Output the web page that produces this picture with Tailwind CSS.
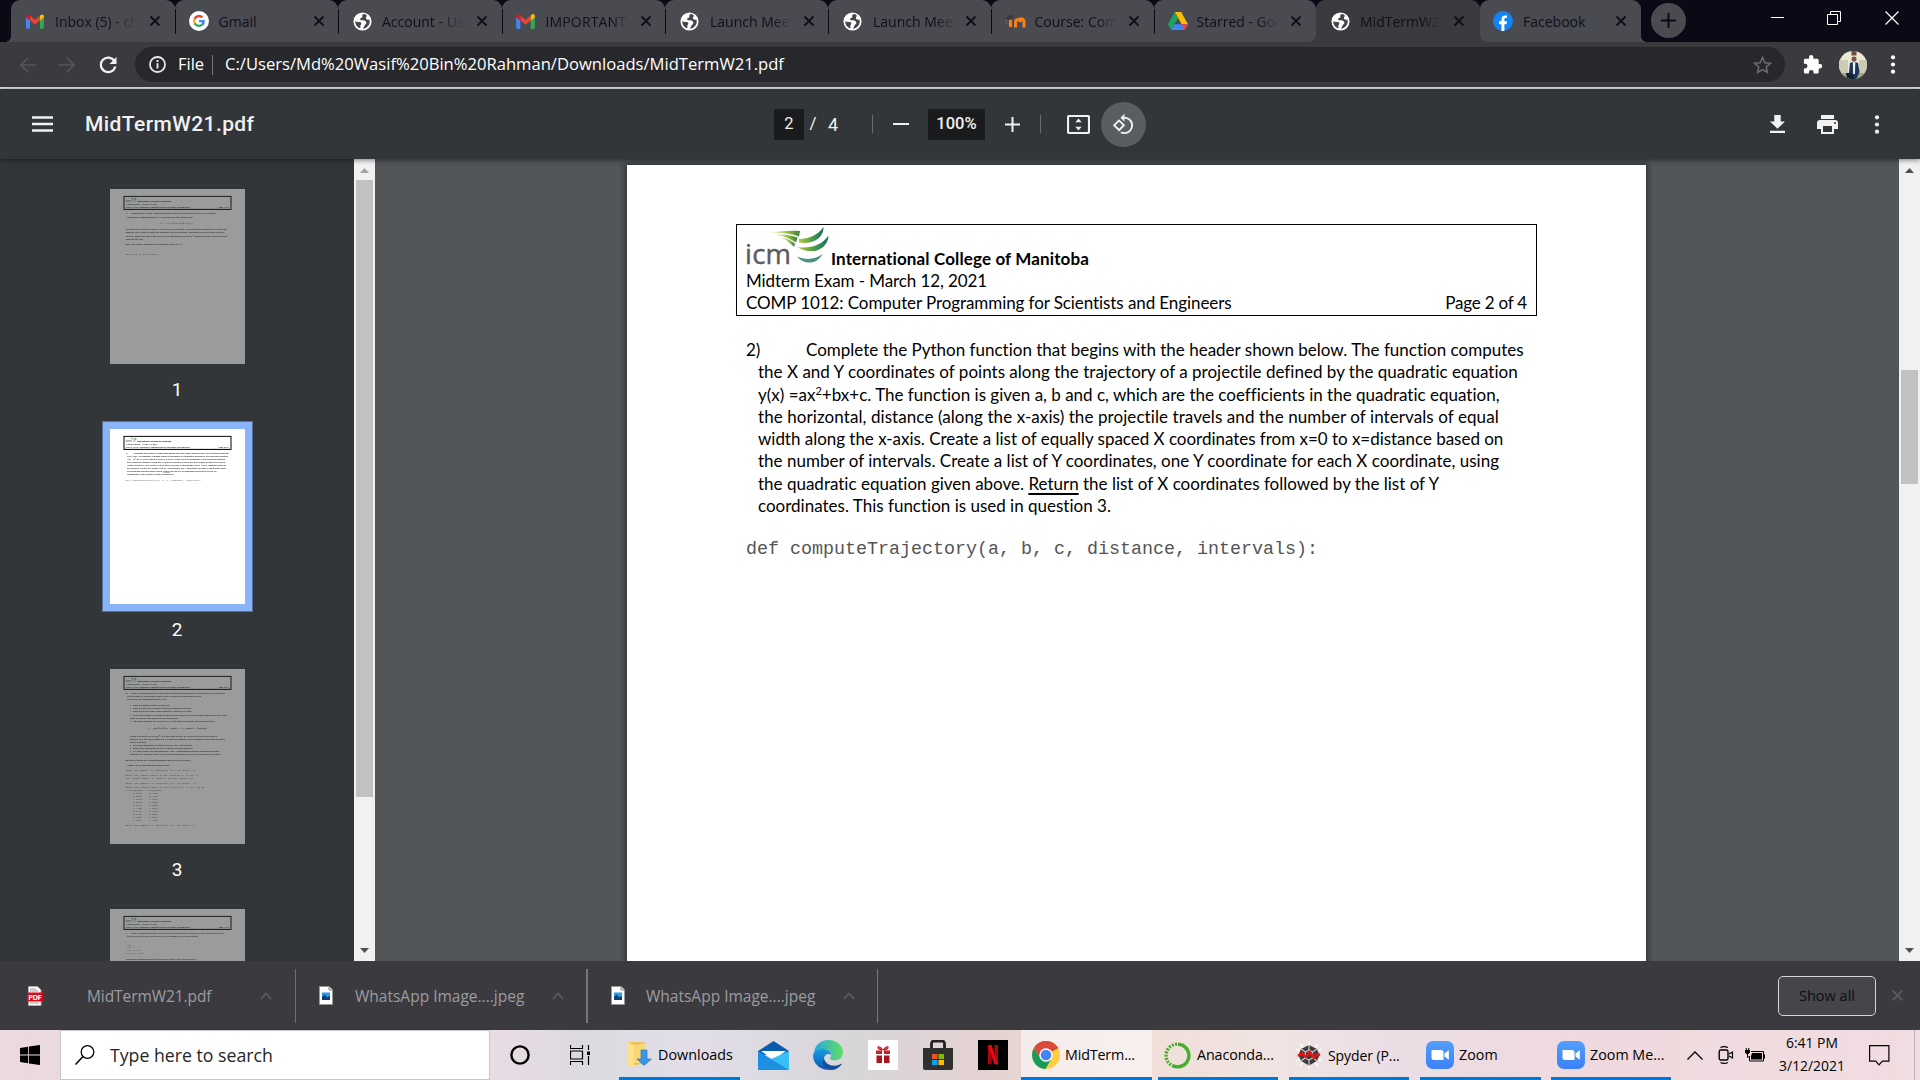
<!DOCTYPE html>
<html lang="en">
<head>
<meta charset="utf-8">
<title>MidTermW21.pdf</title>
<script src="https://cdn.jsdelivr.net/npm/@tailwindcss/browser@4"></script>
</head>
<body class="w-[1920px] h-[1080px] overflow-hidden bg-[#525659] font-['Open_Sans','Noto_Sans',sans-serif] flex flex-col">

<!-- shared symbols -->
<svg class="absolute w-0 h-0">
  <defs><linearGradient id="zg" x1="0" y1="0" x2="0" y2="1"><stop offset="0" stop-color="#54a0fb"/><stop offset="1" stop-color="#3b80f7"/></linearGradient></defs>
  <symbol id="gmail" viewBox="0 0 20 16"><path d="M0 3v11.5C0 15.300 .6 16 1.400 16H4.500V6.500z" fill="#4285f4"/><path d="M20 3v11.500c0 .8-.6 1.500-1.400 1.500H15.500V6.500z" fill="#34a853"/><path d="M4.500 1.500 10 6l5.500-4.500V7L10 11.400 4.500 7z" fill="#ea4335"/><path d="M0 2.500C0 .4 2-.6 3.600.7L4.500 1.500V7L0 3.600z" fill="#c5221f"/><path d="M20 2.500C20 .4 18-.6 16.400.7l-.9.8V7L20 3.600z" fill="#fbbc04"/></symbol>
  <symbol id="globe" viewBox="0 0 20 20"><circle cx="10" cy="10" r="9.500" fill="#fff"/><path d="M12.300 2.200c-2.300.2-3 1.300-2.500 2.500.5 1-.9 1.300-1.900 1.900-.9.700-.3 1.800.8 2.100 2.300.2 4 .1 4.800 1.200.9 1.100.6 2.400-.5 3.300-1.100.9-1.300 2.600-2.700 4.400 4.300-.5 7.300-3.600 7.300-7.600 0-.8-.2-1.500-.4-2.200-1.400.600-2.900.300-3.400-.8-.5-1.200.1-2.200 1-2.800-.7-.8-1.600-1.500-2.500-2z" fill="#46474b"/><path d="M2.400 9.400c-.2 3.700 2 6.800 5.200 7.800.6-1.200-.1-2 .2-3 .2-1 1-1.300 1-2.100 0-1.300-1.300-1.700-2.800-1.700-1.500.100-2.800-.2-3.600-1z" fill="#46474b"/></symbol>
  <symbol id="x" viewBox="0 0 12 12"><path d="M1.500 1.500l9 9m0-9l-9 9" stroke="currentColor" stroke-width="1.900" fill="none"/></symbol>
  <symbol id="dots" viewBox="0 0 6 22"><circle cx="3" cy="3.500" r="2.200"/><circle cx="3" cy="11" r="2.200"/><circle cx="3" cy="18.500" r="2.200"/></symbol>
  <symbol id="jpeg" viewBox="0 0 14 19"><path d="M.5.500H10L13.500 4v14.500H.5z" fill="#fff" stroke="#999"/><path d="M10 .5V4h3.500" fill="#ddd" stroke="#888"/><path d="M3 6.500h8v7.500H3z" fill="#2a9be8"/><path d="M3 14V11l2.500-2.500 3 3L10 10l1 1v3z" fill="#123c78"/></symbol>
  <symbol id="up" viewBox="0 0 12 8"><path d="M1 7l5-5.500L11 7" fill="none" stroke="currentColor" stroke-width="1.700"/></symbol>
  <symbol id="zoom" viewBox="0 0 28 28"><rect width="28" height="28" rx="7" fill="url(#zg)"/><path d="M5.500 9h9.500a2.500 2.500 0 012.500 2.500V19H8a2.500 2.500 0 01-2.500-2.500zM18.500 12.500 22.800 9.300v9.400l-4.300-3.200z" fill="#fff"/></symbol>
</svg>

<!-- tab strip -->
<div class="h-[42px] shrink-0 bg-[#0a0a17] flex pl-[11px] text-[14px] text-[#100f1b]">
  <div class="relative w-[163.500px] rounded-t-[9px] bg-[#4a4a51] flex items-center pl-[15px] before:absolute before:left-[-6px] before:bottom-0 before:w-[6px] before:h-[6px] before:bg-[radial-gradient(circle_at_0_0,transparent_6px,#4a4a51_6px)]"><svg class="w-[18px] h-[15px]"><use href="#gmail"/></svg><span class="ml-[11px] w-[84px] whitespace-nowrap overflow-hidden [mask-image:linear-gradient(90deg,#000_65%,transparent)]">Inbox (5) - chow</span><svg class="ml-[10px] w-[12px] h-[12px]"><use href="#x"/></svg></div>
  <div class="relative w-[163.500px] rounded-t-[9px] bg-[#4a4a51] flex items-center pl-[14px] before:absolute before:left-0 before:top-[9px] before:w-px before:h-[25px] before:bg-[#0a0a17]"><svg class="w-[20px] h-[20px]" viewBox="0 0 20 20"><circle cx="10" cy="10" r="10" fill="#fff"/><path d="M15.800 10.200c0-.5 0-.9-.1-1.300H10v2.400h3.200c-.2.800-.6 1.400-1.200 1.800l2 1.600c1.200-1.100 1.800-2.700 1.800-4.500z" fill="#4285f4"/><path d="M10 16c1.600 0 3-.5 4-1.400l-2-1.500c-.5.300-1.200.6-2 .6-1.600 0-2.900-1-3.400-2.500l-2 1.600C5.600 14.700 7.700 16 10 16z" fill="#34a853"/><path d="M6.600 11.200a3.600 3.600 0 010-2.400l-2-1.600a6 6 0 000 5.600z" fill="#fbbc05"/><path d="M10 6.300c.9 0 1.700.3 2.300.9l1.800-1.700A6 6 0 004.600 7.200l2 1.600C7.100 7.300 8.400 6.300 10 6.300z" fill="#ea4335"/></svg><span class="ml-[10px] w-[84px]">Gmail</span><svg class="ml-[10px] w-[12px] h-[12px]"><use href="#x"/></svg></div>
  <div class="relative w-[163.500px] rounded-t-[9px] bg-[#4a4a51] flex items-center pl-[15px] before:absolute before:left-0 before:top-[9px] before:w-px before:h-[25px] before:bg-[#0a0a17]"><svg class="w-[19px] h-[19px]"><use href="#globe"/></svg><span class="ml-[10px] w-[84px] whitespace-nowrap overflow-hidden [mask-image:linear-gradient(90deg,#000_65%,transparent)]">Account - User</span><svg class="ml-[10px] w-[12px] h-[12px]"><use href="#x"/></svg></div>
  <div class="relative w-[163.500px] rounded-t-[9px] bg-[#4a4a51] flex items-center pl-[14px] before:absolute before:left-0 before:top-[9px] before:w-px before:h-[25px] before:bg-[#0a0a17]"><svg class="w-[19px] h-[15px]"><use href="#gmail"/></svg><span class="ml-[11px] w-[84px] whitespace-nowrap overflow-hidden tracking-[0.150px] [mask-image:linear-gradient(90deg,#000_80%,transparent)]">IMPORTANT:</span><svg class="ml-[10px] w-[12px] h-[12px]"><use href="#x"/></svg></div>
  <div class="relative w-[163px] rounded-t-[9px] bg-[#4a4a51] flex items-center pl-[15px] before:absolute before:left-0 before:top-[9px] before:w-px before:h-[25px] before:bg-[#0a0a17]"><svg class="w-[19px] h-[19px]"><use href="#globe"/></svg><span class="ml-[11px] w-[83px] whitespace-nowrap overflow-hidden [mask-image:linear-gradient(90deg,#000_75%,transparent)]">Launch Meeting</span><svg class="ml-[10px] w-[12px] h-[12px]"><use href="#x"/></svg></div>
  <div class="relative w-[162.500px] rounded-t-[9px] bg-[#4a4a51] flex items-center pl-[15px] before:absolute before:left-0 before:top-[9px] before:w-px before:h-[25px] before:bg-[#0a0a17]"><svg class="w-[19px] h-[19px]"><use href="#globe"/></svg><span class="ml-[11px] w-[83px] whitespace-nowrap overflow-hidden [mask-image:linear-gradient(90deg,#000_75%,transparent)]">Launch Meeting</span><svg class="ml-[9px] w-[12px] h-[12px]"><use href="#x"/></svg></div>
  <div class="relative w-[163px] rounded-t-[9px] bg-[#4a4a51] flex items-center pl-[14px] before:absolute before:left-0 before:top-[9px] before:w-px before:h-[25px] before:bg-[#0a0a17]"><svg class="w-[21px] h-[16px]" viewBox="0 0 21 16"><path d="M0 5 6 1.500 9 4 3 6.500z" fill="#3a3a3a"/><path d="M1.500 6v5" stroke="#77604d" stroke-width=".8"/><path d="M5.500 14V7m5 7.500V9.500a2.500 2.500 0 015-.3m-5 5.300V9m8.500 5.500V8.800a3 3 0 00-5.500-1.600" fill="none" stroke="#f98012" stroke-width="3"/></svg><span class="ml-[9px] w-[83px] whitespace-nowrap overflow-hidden [mask-image:linear-gradient(90deg,#000_75%,transparent)]">Course: Comp</span><svg class="ml-[10px] w-[12px] h-[12px]"><use href="#x"/></svg></div>
  <div class="relative z-10 w-[162.500px] rounded-t-[9px] rounded-br-[8px] bg-[#4a4a51] flex items-center pl-[14px] before:absolute before:left-0 before:top-[9px] before:w-px before:h-[25px] before:bg-[#0a0a17]"><svg class="w-[20px] h-[18px]" viewBox="0 0 20 17" preserveAspectRatio="none"><path d="M6.800 0h6.400L20 11.500h-6.400z" fill="#fbbc04"/><path d="M6.800 0 0 11.500 3.300 17 10 5.600z" fill="#1ea362"/><path d="M3.300 17 6.600 11.500H20L16.700 17z" fill="#4285f4"/><path d="M13.600 11.500H20L16.700 17z" fill="#ea4335"/></svg><span class="ml-[9px] w-[84px] whitespace-nowrap overflow-hidden [mask-image:linear-gradient(90deg,#000_70%,transparent)]">Starred - Google</span><svg class="ml-[9px] w-[12px] h-[12px]"><use href="#x"/></svg></div>
  <div class="relative w-[164px] rounded-t-[9px] bg-[#3b3a3e] flex items-center pl-[15px] before:absolute before:left-[-8px] before:bottom-0 before:w-[180px] before:h-[8px] before:bg-[#3b3a3e]"><svg class="w-[19px] h-[19px]"><use href="#globe"/></svg><span class="ml-[10px] w-[82px] whitespace-nowrap overflow-hidden [mask-image:linear-gradient(90deg,#000_75%,transparent)]">MidTermW21</span><svg class="ml-[11px] w-[12px] h-[12px]"><use href="#x"/></svg></div>
  <div class="relative z-10 w-[161px] rounded-t-[9px] rounded-bl-[8px] bg-[#4a4a51] flex items-center pl-[13px] after:absolute after:right-[-6px] after:bottom-0 after:w-[6px] after:h-[6px] after:bg-[radial-gradient(circle_at_100%_0,transparent_6px,#4a4a51_6px)]"><svg class="w-[20px] h-[20px]" viewBox="0 0 20 20"><circle cx="10" cy="10" r="10" fill="#1184f2"/><path d="M8.400 20v-6.800H6v-2.900h2.400V8.200c0-2.500 1.500-3.800 3.700-3.800.8 0 1.600.1 1.900.2v2.500h-1.300c-1 0-1.300.6-1.300 1.300v1.900h2.600l-.4 2.900h-2.200V20z" fill="#fff"/></svg><span class="ml-[10px] w-[84px]">Facebook</span><svg class="ml-[8px] w-[12px] h-[12px]"><use href="#x"/></svg></div>
  <div class="ml-[10px] mt-[3px] w-[35px] h-[35px] rounded-full bg-[#4a4a51] flex items-center justify-center"><svg class="w-[15px] h-[15px]" viewBox="0 0 15 15"><path d="M7.500 0v15M0 7.500h15" stroke="#0a0a17" stroke-width="2"/></svg></div>
  <div class="ml-[85px] mt-[11px] flex items-center h-[14px]">
    <svg class="w-[13px] h-[13px]" viewBox="0 0 13 13"><path d="M0 5.500h13" stroke="#fff"/></svg>
    <svg class="ml-[43px] w-[14px] h-[14px]" viewBox="0 0 14 14"><path d="M.5 3.500h10v10H.5zM3.500 3V.5h10v10H11" fill="none" stroke="#fff"/></svg>
    <svg class="ml-[44px] w-[14px] h-[14px]" viewBox="0 0 14 14"><path d="M.5.500l13 13m0-13l-13 13" stroke="#fff" stroke-width="1.200"/></svg>
  </div>
</div>

<!-- address bar -->
<div class="h-[45px] shrink-0 bg-[#3b3a3e] flex items-center pl-[19px]">
  <svg class="w-[17px] h-[16px]" viewBox="0 0 17 16"><path d="M17 8H2M9 1L2 8l7 7" fill="none" stroke="#55545a" stroke-width="1.700"/></svg>
  <svg class="ml-[23px] w-[17px] h-[16px]" viewBox="0 0 17 16"><path d="M0 8h15M8 1l7 7-7 7" fill="none" stroke="#55545a" stroke-width="1.700"/></svg>
  <svg class="ml-[23px] w-[18px] h-[18px]" viewBox="0 0 18 18"><path d="M15.400 5A7.300 7.300 0 1016.300 10.500" fill="none" stroke="#f1f1f1" stroke-width="2.200"/><path d="M17.500 1v7h-7z" fill="#f1f1f1"/></svg>
  <div class="ml-[18px] w-[1650px] h-[35px] rounded-full bg-[#27282b] flex items-center pl-[14px] text-white">
    <svg class="w-[17px] h-[17px]" viewBox="0 0 17 17"><circle cx="8.500" cy="8.500" r="7.500" fill="none" stroke="#e8e8e8" stroke-width="1.800"/><path d="M8.500 7.200v5.300M8.500 4v2" stroke="#e8e8e8" stroke-width="1.900"/></svg>
    <span class="ml-[12px] w-[34px] text-[16.500px]">File</span>
    <div class="w-px h-[20px] bg-[#77787b]"></div>
    <span class="ml-[12px] text-[16.600px]">C:/Users/Md%20Wasif%20Bin%20Rahman/Downloads/MidTermW21.pdf</span>
    <svg class="ml-auto mr-[13px] w-[19px] h-[18px]" viewBox="0 0 19 18"><path d="M9.500 1.500l2.300 5.200 5.600.6-4.200 3.700 1.200 5.500-4.900-2.900-4.900 2.900 1.200-5.500L1.600 7.300l5.600-.6z" fill="none" stroke="#6c6d71" stroke-width="1.500"/></svg>
  </div>
  <svg class="ml-[18px] w-[19px] h-[19px]" viewBox="0 0 19 19"><path d="M17 9h-1.300V5.400c0-1-.8-1.700-1.700-1.700h-3.600V2.300a2.200 2.200 0 00-4.400 0v1.400H2.500C1.500 3.700.9 4.400.9 5.400v3.300h1.200a2.400 2.400 0 010 4.800H.9v3.400c0 1 .7 1.700 1.600 1.700h3.400v-1.300a2.300 2.300 0 014.700 0v1.300H14c1 0 1.700-.7 1.700-1.700v-3.500H17A2.200 2.200 0 0017 9z" fill="#fff"/></svg>
  <svg class="ml-[17px] w-[28px] h-[28px]" viewBox="0 0 28 28"><clipPath id="av"><circle cx="14" cy="14" r="14"/></clipPath><g clip-path="url(#av)"><path d="M0 0h28v28H0z" fill="#ece9d3"/><path d="M0 9h9v14H0zM20 9h8v13h-8z" fill="#c9cbb4"/><path d="M0 22h28v6H0z" fill="#9da58a"/><path d="M12.500 0h5v4.500h-5z" fill="#704a45"/><circle cx="15" cy="8" r="2.500" fill="#7a5547"/><path d="M11 12l4-1.500 4 1.500 1.500 9-3 7H9l1-7z" fill="#1d3557"/><path d="M13.800 11h2.600l-.5 12h-1.800z" fill="#e9eef2"/><path d="M7 22h5l4 6H8z" fill="#14202d"/></g></svg>
  <svg class="ml-[23px] w-[6px] h-[21px] fill-white"><use href="#dots"/></svg>
</div>
<div class="h-[2px] shrink-0 bg-[#dedfe0]"></div>

<!-- viewer toolbar -->
<div class="relative z-20 h-[70px] shrink-0 bg-[#323639] shadow-[0_1px_5px_rgba(0,0,0,0.5)] flex items-center pl-[32px] text-[#f1f1f1] font-['Roboto',sans-serif]">
  <svg class="w-[21px] h-[16px]" viewBox="0 0 21 16"><path d="M0 1.500h21M0 8h21M0 14.500h21" stroke="#f1f1f1" stroke-width="2.300"/></svg>
  <span class="ml-[32px] mt-[2px] w-[689px] text-[21px] font-medium tracking-[0.420px]">MidTermW21.pdf</span>
  <span class="w-[30px] h-[31px] bg-[#191b1c] flex items-center justify-center text-[16.500px]">2</span>
  <span class="ml-[1px] w-[16px] text-[17px] text-center">/</span>
  <span class="ml-[7px] w-[12px] text-[18px]">4</span>
  <div class="ml-[32px] w-px h-[18px] bg-[#6b6e70]"></div>
  <svg class="ml-[20px] w-[16px] h-[16px]" viewBox="0 0 16 16"><path d="M0 8h16" stroke="#f1f1f1" stroke-width="2"/></svg>
  <span class="ml-[19px] w-[57px] h-[31px] bg-[#191b1c] flex items-center justify-center text-[16.500px] font-medium">100%</span>
  <svg class="ml-[20px] w-[15px] h-[15px]" viewBox="0 0 15 15"><path d="M0 7.500h15M7.500 0v15" stroke="#f1f1f1" stroke-width="2"/></svg>
  <div class="ml-[20px] w-px h-[18px] bg-[#6b6e70]"></div>
  <svg class="ml-[26px] w-[23px] h-[19px]" viewBox="0 0 23 19"><rect x="1" y="1" width="21" height="17" rx="1.500" fill="none" stroke="#f1f1f1" stroke-width="2.200"/><path d="M11.500 3.500l3.200 3.700H8.300zM11.500 15.500l3.200-3.700H8.300z" fill="#f1f1f1"/></svg>
  <div class="ml-[11px] w-[45px] h-[45px] rounded-full bg-[#5a5e60] flex items-center justify-center"><svg class="w-[23px] h-[23px]" viewBox="0 0 24 24"><path fill="#f1f1f1" d="M7.340 6.410L.86 12.900l6.490 6.480 6.490-6.480-6.500-6.490zM3.690 12.900l3.660-3.660L11 12.900l-3.660 3.660-3.650-3.660zm15.670-6.260C17.610 4.880 15.300 4 13 4V.76L8.760 5 13 9.240V6c1.790 0 3.580.68 4.950 2.050 2.730 2.730 2.730 7.170 0 9.900C16.580 19.320 14.790 20 13 20c-.97 0-1.940-.21-2.840-.61l-1.490 1.490C10.020 21.620 11.510 22 13 22c2.300 0 4.610-.88 6.360-2.640 3.520-3.510 3.520-9.210 0-12.720z"/></svg></div>
  <svg class="ml-[624px] w-[15px] h-[18px]" viewBox="0 0 15 18"><path d="M15 6.500h-4.300V0H4.300v6.500H0l7.500 7.200zM0 15.700V18h15v-2.300z" fill="#f1f1f1"/></svg>
  <svg class="ml-[32px] w-[21px] h-[19px]" viewBox="0 0 21 19"><path d="M4 0h13v4H4zM18 5H3a3 3 0 00-3 3v6h4v5h13v-5h4V8a3 3 0 00-3-3zm-3 12H6v-6h9zm3-8a1 1 0 110-2 1 1 0 010 2z" fill="#f1f1f1"/></svg>
  <svg class="ml-[36px] w-[6px] h-[21px] fill-[#f1f1f1]"><use href="#dots"/></svg>
</div>

<!-- viewer body -->
<div class="h-[802px] shrink-0 flex overflow-hidden">
  <div id="rail" class="w-[354px] bg-[#323639] pl-[102px] pt-[22px] flex flex-col overflow-hidden"></div>
  <div class="w-[21px] bg-[#f1f1f1] flex flex-col items-center">
    <svg class="mt-[9px] w-[9px] h-[5px]" viewBox="0 0 9 5"><path d="M0 5l4.500-5L9 5z" fill="#a3a3a3"/></svg>
    <div class="mt-[7px] w-[17px] h-[617px] bg-[#c1c1c1]"></div>
    <svg class="mt-[151px] w-[9px] h-[5px]" viewBox="0 0 9 5"><path d="M0 0l4.500 5L9 0z" fill="#505050"/></svg>
  </div>
  <div class="w-[1524px] pl-[252px] pt-[6px]">
    <div id="doc" class="w-[1019px] h-[1319px] bg-white shadow-[0_0_6px_2px_rgba(0,0,0,0.4)]">
      <div class="pt-[59px] px-[109px] text-[17px] leading-[22.300px] text-black font-['Lato',sans-serif] [font-variant-ligatures:none] whitespace-nowrap">
        <div class="frame h-[92px] border border-black px-[9px] flex flex-col">
          <div class="flex h-[45px] items-end">
            <svg class="w-[84px] h-[43px] overflow-visible" viewBox="0 0 84 43"><defs><linearGradient id="lg"><stop offset="0" stop-color="#b4cc3c"/><stop offset=".55" stop-color="#4d9a4a"/><stop offset="1" stop-color="#12705f"/></linearGradient><linearGradient id="lf"><stop offset="0" stop-color="#d5e59a" stop-opacity=".1"/><stop offset=".6" stop-color="#9cc03c"/><stop offset="1" stop-color="#39813c"/></linearGradient></defs><path d="M22 6c12-2 22-2.500 32-2l-1 5.500C43 5.500 33 6 22 6z" fill="url(#lf)"/><path d="M26 8c12-1.500 20 .5 25.500 2.500l-1.500 5C42 10.500 37 8.500 26 8z" fill="url(#lf)"/><path d="M33 10.500c8 0 12 3.500 16 6l-1 3.500C43 15 40 12 33 10.500z" fill="url(#lf)"/><path d="M53 12c10 0 19-4 24.500-12 .5 9-8 18-24.500 15.500z" fill="url(#lg)"/><path d="M51 20c12 2 25-1.500 31.500-11.500C82 21 68 30 51 20z" fill="url(#lg)"/><path d="M51 29.500c9 4 18 3 25.500-2.500C71 38 58 38 51 29.500z" fill="#4a8f84"/><text x="-1" y="37" font-family="Open Sans" font-size="27.500" textLength="46" fill="#5b5b5f" stroke="#5b5b5f" stroke-width=".4">icm</text></svg>
            <b class="ml-[1px] h-[22px] leading-[22px] tracking-[0.130px]">International College of Manitoba</b>
          </div>
          <div class="tracking-[-0.090px]">Midterm Exam - March 12, 2021</div>
          <div class="flex justify-between"><span class="tracking-[-0.083px]">COMP 1012: Computer Programming for Scientists and Engineers</span><span class="pn tracking-[-0.200px]">Page 2 of 4</span></div>
        </div>
        <div class="body pt-[23px] pl-[22px]">
          <div class="-ml-[12px] flex"><span class="w-[60px]">2)</span><span>Complete the Python function that begins with the header shown below. The function computes</span></div>
          <div class="tracking-[0.015px]">the X and Y coordinates of points along the trajectory of a projectile defined by the quadratic equation</div>
          <div>y(x) =ax<sup class="text-[11px] leading-none">2</sup>+bx+c. The function is given a, b and c, which are the coefficients in the quadratic equation,</div>
          <div class="tracking-[0.080px]">the horizontal, distance (along the x-axis) the projectile travels and the number of intervals of equal</div>
          <div class="tracking-[-0.027px]">width along the x-axis. Create a list of equally spaced X coordinates from x=0 to x=distance based on</div>
          <div class="tracking-[0.016px]">the number of intervals. Create a list of Y coordinates, one Y coordinate for each X coordinate, using</div>
          <div>the quadratic equation given above. <span class="underline decoration-[1.500px] underline-offset-[3px]">Return</span> the list of X coordinates followed by the list of Y</div>
          <div>coordinates. This function is used in question 3.</div>
          <div class="-ml-[12px] mt-[22px] font-['Liberation_Mono',monospace] text-[18.330px] text-[#555]">def computeTrajectory(a, b, c, distance, intervals):</div>
        </div>
      </div>
    </div>
  </div>
  <div class="w-[21px] bg-[#f1f1f1] flex flex-col items-center">
    <svg class="mt-[9px] w-[9px] h-[5px]" viewBox="0 0 9 5"><path d="M0 5l4.500-5L9 5z" fill="#505050"/></svg>
    <div class="mt-[197px] w-[17px] h-[114px] bg-[#c1c1c1]"></div>
    <svg class="mt-[464px] w-[9px] h-[5px]" viewBox="0 0 9 5"><path d="M0 0l4.500 5L9 0z" fill="#505050"/></svg>
  </div>
</div>

<!-- download shelf -->
<div class="h-[69px] shrink-0 bg-[#3b3a3e] flex items-center text-[15.500px] text-[#9c9ca1] relative z-20">
  <svg class="ml-[27px] w-[16px] h-[20px]" viewBox="0 0 16 20"><path d="M1.500.500h9l3.500 3.500v15.500h-12.500z" fill="#fff" stroke="#aaa"/><path d="M3 3h6M3 5h8M3 17h9" stroke="#999"/><rect y="6.500" width="16" height="9" fill="#d8091b"/><text x="1.300" y="13.800" font-family="Open Sans" font-size="7.500" font-weight="700" textLength="13.400" fill="#fff">PDF</text></svg>
  <span class="ml-[44px] mt-[2px] w-[173px] tracking-[-0.080px]">MidTermW21.pdf</span>
  <svg class="w-[12px] h-[8px] text-[#5f5e64]"><use href="#up"/></svg>
  <div class="ml-[23px] w-px h-[54px] bg-[#6e6d72]"></div>
  <svg class="ml-[23px] w-[14px] h-[21px]"><use href="#jpeg"/></svg>
  <span class="ml-[22px] mt-[2px] w-[197px]">WhatsApp Image....jpeg</span>
  <svg class="w-[12px] h-[8px] text-[#5f5e64]"><use href="#up"/></svg>
  <div class="ml-[22px] w-[2px] h-[54px] bg-[#77767b]"></div>
  <svg class="ml-[23px] w-[14px] h-[21px]"><use href="#jpeg"/></svg>
  <span class="ml-[21px] mt-[2px] w-[197px]">WhatsApp Image....jpeg</span>
  <svg class="w-[12px] h-[8px] text-[#5f5e64]"><use href="#up"/></svg>
  <div class="ml-[22px] w-px h-[54px] bg-[#77767b]"></div>
  <div class="ml-auto w-[98px] h-[40px] rounded-[5px] border border-[#d5d5d7] bg-[#46454a] text-[14.500px] text-[#0e0d18] flex items-center justify-center">Show all</div>
  <svg class="ml-[15px] mr-[16px] w-[13px] h-[13px] text-[#5b5a60]"><use href="#x"/></svg>
</div>

<!-- taskbar -->
<div class="h-[50px] shrink-0 flex items-center text-[14.300px] text-black whitespace-nowrap bg-[linear-gradient(90deg,#ead9dd_0px,#e9dce3_490px,#dcdadf_580px,#e1deea_690px,#d8d5d8_860px,#e4d2d2_980px,#f1dfda_1160px,#f0e4e2_1270px,#ecdde5_1400px,#efd9de_1600px,#f1dde1_1920px)]">
  <svg class="ml-[20px] w-[20px] h-[20px]" viewBox="0 0 20 20"><path d="M0 2.900 8.200 1.700V9.600H0zM9 1.600 20 0V9.600H9zM0 10.400H8.200v7.900L0 17.100zM9 10.400H20V20L9 18.400z"/></svg>
  <div class="ml-[20px] w-[430px] h-[50px] bg-white border border-[#cac6c8] flex items-center pl-[14px] text-[17.700px] text-[#262626]"><svg class="w-[20px] h-[20px]" viewBox="0 0 20 20"><circle cx="12.500" cy="7" r="6.300" fill="none" stroke="#000" stroke-width="1.300"/><path d="M8 11.500l-7.500 8" stroke="#000" stroke-width="1.500"/></svg><span class="ml-[15px]">Type here to search</span></div>
  <svg class="ml-[20px] w-[20px] h-[20px]" viewBox="0 0 20 20"><circle cx="10" cy="10" r="8.600" fill="none" stroke="#000" stroke-width="2.400"/></svg>
  <svg class="ml-[40px] w-[20px] h-[20px]" viewBox="0 0 20 20"><path d="M.5 0v3.500h12V0M.5 20v-3.500h12V20M.5 6h12v8H.5zM18.500 0v5M18.500 11v9" fill="none" stroke="#000" stroke-width="1.200"/><path d="M17 6.500h3V10h-3z"/></svg>
  <div class="ml-[29px] w-[121px] h-full border-b-3 border-[#0078d7] flex items-center pl-[9px] pt-[3px]"><svg class="w-[25px] h-[26px]" viewBox="0 0 25 26"><path d="M1 0h15v22l-9 1-6 0z" fill="#eac257"/><path d="M0 0l6 3v23l-6-3z" fill="#fde08a"/><path d="M6 3l11-2v20H6z" fill="#f8d775"/><path d="M13 8h6v9h4.500L16 23.500 9 17h4z" fill="#3a97e8" stroke="#1c6dbd" stroke-width=".6"/></svg><span class="ml-[5px] tracking-[0.050px]">Downloads</span></div>
  <svg class="ml-[18px] w-[31px] h-[29px]" viewBox="0 0 31 29"><path d="M0 10 15.500 0 31 10v4H0z" fill="#0a5cab"/><path d="M3 10h25l-12.500 9z" fill="#fff"/><path d="M0 10v19h31z" fill="#1a8fe3"/><path d="M31 10v19H0l13-11z" fill="#38c0f6"/><path d="M0 29 13 18 31 29z" fill="#1d91e0"/></svg>
  <svg class="ml-[24px] w-[30px] h-[30px]" viewBox="0 0 30 30"><defs><linearGradient id="e1"><stop offset="0" stop-color="#2aa8e0"/><stop offset="1" stop-color="#5fdd63"/></linearGradient><linearGradient id="e2" x1="0" y1="0" x2="0" y2="1"><stop offset="0" stop-color="#1b9de2"/><stop offset="1" stop-color="#0b58b4"/></linearGradient></defs><path d="M.7 13C2 5 8 0 15 0c9 0 15 6 15 12.500 0 5-4 7.800-8.500 7.800-3.500 0-5-1.300-4.500-2.300.5-.7 1.500-1.500 1.300-3.300C18 10 12 8.500 7.500 9 4 9.300 1.500 11 .7 13z" fill="url(#e1)"/><path d="M.1 15C1 10.500 5 8.500 9 8.800c5 .3 9 2.200 9.300 6-4-2.500-8 1-7.300 5.200.7 5 5 9.200 10 8.500C10 33-.5 25 .1 15z" fill="url(#e2)"/><path d="M11 18c.5 5 6 8 11 7.700 2.500 0 4.500-1.200 5.800-2 .8-.2 1 .4.600 1C24 30.500 17 31 13.500 28.500 9.500 26 9 21 11 18z" fill="#134f9e"/></svg>
  <svg class="ml-[25px] w-[30px] h-[30px]" viewBox="0 0 30 30"><path d="M0 0h30v30H0z" fill="#fff"/><path d="M8 10.500h6v3.500H8zM16 10.500h6v3.500h-6z" fill="#c51f28"/><path d="M8.500 15.500H14V23H8.500zM16 15.500h5.500V23H16z" fill="#a8171f"/><path d="M14.500 10c-6-1-5-4-3-3s3 3 3 3m1 0c6-1 5-4 3-3s-3 3-3 3" fill="none" stroke="#c51f28" stroke-width="1.300"/></svg>
  <svg class="ml-[25px] w-[30px] h-[30px]" viewBox="0 0 30 30"><path d="M8.500 9V3.500A2.500 2.500 0 0111 1h8a2.500 2.500 0 012.500 2.500V9" fill="none" stroke="#222" stroke-width="2.800"/><path d="M0 8h30v20a2 2 0 01-2 2H2a2 2 0 01-2-2z" fill="#303030"/><path d="M9 14h5.500v5H9z" fill="#f25022"/><path d="M15.500 14H21v5h-5.500z" fill="#7fba00"/><path d="M9 20h5.500v5H9z" fill="#00a4ef"/><path d="M15.500 20H21v5h-5.500z" fill="#ffb900"/></svg>
  <svg class="ml-[25px] w-[30px] h-[30px]" viewBox="0 0 30 30"><path d="M0 0h30v30H0z"/><path d="M10 5h3.500v19l-3.500.5zM16.500 5H20v19.500l-3.500-.5z" fill="#a80710"/><path d="M10 5h3.500L20 24.500l-3.700-.5z" fill="#e50914"/></svg>
  <div class="ml-[13px] w-[131px] h-full bg-white/55 border-b-3 border-[#0078d7] flex items-center pl-[11px] pt-[3px]"><svg class="w-[28px] h-[28px]" viewBox="0 0 28 28"><circle cx="14" cy="14" r="14" fill="#ffcd41"/><path d="M14 14 1.900 7A14 14 0 0126.100 7z" fill="#db4437"/><path d="M14 7.500h12.400A14 14 0 001.900 7l6.300 10z" fill="#db4a3c"/><path d="M1.900 7A14 14 0 0013.500 28l6-10.500L14 20.500 8.300 17z" fill="#1a9c59"/><circle cx="14" cy="14" r="6.700" fill="#fff"/><circle cx="14" cy="14" r="5.300" fill="#4285f4"/></svg><span class="ml-[5px] tracking-[-0.150px]">MidTerm...</span></div>
  <div class="ml-[6px] w-[120px] h-full border-b-3 border-[#0078d7] flex items-center pl-[6px] pt-[3px]"><svg class="w-[27px] h-[27px]" viewBox="0 0 27 27"><path d="M14 2.200A11.300 11.300 0 119 23.800" fill="none" stroke="#43b02a" stroke-width="3.400"/><path d="M10 24.300A11.300 11.300 0 0113 2.200" fill="none" stroke="#43b02a" stroke-width="3.400" stroke-dasharray="2 1.300"/></svg><span class="ml-[6px] tracking-[-0.100px]">Anaconda...</span></div>
  <div class="ml-[11px] w-[120px] h-full border-b-3 border-[#0078d7] flex items-center pl-[7px] pt-[3px]"><svg class="w-[26px] h-[28px]" viewBox="0 0 26 28"><path d="M13 0v28M0 8l26 12M26 8L0 20M4 3l18 22M22 3L4 25" stroke="#fff" stroke-width="1.200"/><path d="M13 4l8 4 2.500 6L21 20l-8 4.500L5 20 2.500 14 5 8z" fill="#3d3d40"/><path d="M13 4v5M13 19v5M5 8l4.500 3M21 8l-4.500 3M5 20l4-3M21 20l-4-3M9.500 11l3.500-2 3.500 2v6L13 19l-4-2z" fill="none" stroke="#c9c9cc" stroke-width="1.200"/><path d="M2 15l4-3 4 4 4-5 4 6 3-4 3 1" fill="none" stroke="#ee1111" stroke-width="2.400"/></svg><span class="ml-[6px] text-[14px] tracking-[-0.080px]">Spyder (P...</span></div>
  <div class="ml-[11px] w-[121px] h-full border-b-3 border-[#0078d7] flex items-center pl-[6px] pt-[3px]"><svg class="w-[28px] h-[28px]"><use href="#zoom"/></svg><span class="ml-[5px]">Zoom</span></div>
  <div class="ml-[10px] w-[120px] h-full border-b-3 border-[#0078d7] flex items-center pl-[6px] pt-[3px]"><svg class="w-[28px] h-[28px]"><use href="#zoom"/></svg><span class="ml-[5px]">Zoom Me...</span></div>
  <svg class="ml-[16px] w-[16px] h-[9px]" viewBox="0 0 16 9"><path d="M.5 8.500 8 1l7.500 7.500" fill="none" stroke="#000" stroke-width="1.300"/></svg>
  <svg class="ml-[15px] w-[16px] h-[18px]" viewBox="0 0 16 18"><rect x="1.200" y="4" width="8.800" height="10" rx="1.500" fill="none" stroke="#000" stroke-width="1.400"/><path d="M11 8l3.500-2v6L11 10M2.500 1.500Q6-.3 10 1.500M2.500 16.500q3.500 1.800 7.500 0" fill="none" stroke="#000" stroke-width="1.200"/></svg>
  <svg class="ml-[11px] w-[20px] h-[15px]" viewBox="0 0 20 15"><path d="M6 3.500h12.500v9.500H4.500V8" fill="none" stroke="#000" stroke-width="1"/><path d="M7 5h10v6.500H6V8zM19 6.500h1v4h-1zM0 2h5v2.500L3.500 6h-2L0 4.500zM.8 0h1v2h-1zM3.200 0h1v2h-1zM2 6h1v2.500h2v1H2z"/></svg>
  <div class="ml-[13px] w-[68px] text-center leading-[23px] text-[13.900px]"><div class="-mt-[2px]">6:41 PM</div><div>3/12/2021</div></div>
  <svg class="ml-[23px] w-[21px] h-[21px]" viewBox="0 0 21 21"><path d="M.6.600h19.300v15.500h-6.500L10 19.800 6.700 16.100H.6z" fill="none" stroke="#000" stroke-width="1.200"/></svg>
  <div class="ml-[24px] w-px h-full bg-[#bfb0b5]"></div>
</div>

<script>
// Page bodies for the thumbnail rail: [centre y, left x, text, monospace?]
const pages = {
  1: [[184,118,"1)      Complete the Python function that begins with the header shown below. The function"],[211,131,"computes an approximation to e^x using the equation given below."],[259,382,"eˣ = 1 + x + x²/2! + x³/3! + x⁴/4! ..."],[302,118,"The function is given the values of x and tolerance as floats. Add terms to the summation as long as the"],[325,118,"absolute value of the current term is greater than the tolerance. Count the number of terms added in"],[357,118,"the sum. Return the sum of the series as the approximate value of e^x followed by the number of terms"],[380,118,"added to the sum."],[418,118,"Don't use math to compute the approximate value of e^x."],[493,118,"def etox(x, tolerance):",1]],
  3: [[184,118,"3)      Write a Python program that calls the functions computeTrajectory from question 2 to compute"],[207,131,"the trajectory of a projectile defined by the quadratic equation given above."],[229,131,"Do not use the computeTrajectory here!"],[274,150,"•   Input the integer number of intervals."],[297,150,"•   Loop as long as the number of intervals is greater than zero."],[320,150,"•   Input the launch angle of the projectile in degrees as a float."],[350,150,"•   If the launch angle is less than or equal to zero display an error message that includes the launch"],[372,150,"angle as shown in the sample run of the program."],[395,150,"•   Otherwise compute the values of a, b, c and distance using the following equations:"],[448,290,"a = −g/(2v²cos²θ),  b = tan(θ),  c = y₀,  distance = v²sin(2θ)/g"],[508,150,"where g is gravity of 9.81 m/s², v0 is the initial velocity of 10 m/s, θ is the launch angle in"],[531,150,"degrees, y0 is the initial height of 0.1 meters and distance is the horizontal distance the projectile"],[553,150,"travels in meters."],[576,150,"•   Call computeTrajectory to get the list of X and Y coordinates."],[599,150,"•   Display the heading shown in the sample run of the program."],[621,150,"•   In a loop, display the corresponding X and Y coordinates that define the points along the"],[644,150,"trajectory to 4 decimal places in 10 character positions, one pair of values per line of output."],[689,118,"Be sure to include any import statements required by the program."],[727,118,"A sample run of the program is shown below."],[765,118,"Enter the number of intervals (or 0 to quit): 10",1],[803,118,"Enter the launch angle of the projectile (0-90): 0",1],[825,118,"The launch angle, 0, must be greater than zero!",1],[863,118,"Enter the number of intervals (or 0 to quit): 10",1],[893,118,"Enter the launch angle of the projectile (0-90): 27.50",1],[916,118,"X coordinate Y coordinate",1],[939,174,"0.0000     0.1000",1],[961,174,"0.8572     0.4868",1],[984,174,"1.6702     0.6984",1],[1007,174,"2.5053     0.8539",1],[1029,174,"3.3404     0.9773",1],[1052,174,"4.1755     1.0866",1],[1074,174,"5.0106     0.9773",1],[1097,174,"5.8457     0.8539",1],[1120,174,"6.6808     0.6984",1],[1142,174,"7.5159     0.4868",1],[1180,118,"Enter the number of intervals (or 0 to quit): 0",1]],
  4: [[184,118,"4)      Write a function that gets n as the input and print out the n number of the sequence below. (in"],[207,131,"the example, the user has entered 5 as the number of the desired terms)"],[249,118,"1",1],[272,118,"1,2A",1],[292,118,"1,2A,4",1],[312,118,"1,2A,4A,16",1],[335,118,"1,2A,4A,16,5",1],[380,118,"Finding the relationship between the terms is part of the question mark."]]
};
const doc = document.getElementById("doc"), rail = document.getElementById("rail");
for (let n = 1; n <= 4; n++) {
  const item = document.createElement("div");
  item.className = "w-[151px] h-[240px] shrink-0 flex flex-col items-center";
  const holder = document.createElement("div");
  holder.className = n === 2
    ? "w-[151px] h-[191px] shrink-0 bg-[#8ab4f8] border border-[#56709a] p-[7px]"
    : "w-[151px] h-[191px] shrink-0 p-[8px] opacity-50";
  const clip = document.createElement("div");
  clip.className = "w-[135px] h-[175px] overflow-hidden bg-white";
  const page = doc.cloneNode(true);
  page.removeAttribute("id");
  page.setAttribute("aria-hidden", "true");
  page.className = "w-[1019px] h-[1319px] bg-white origin-top-left scale-[0.1325]";
  const frame = page.querySelector(".frame");
  frame.classList.add("outline-[7px]", "outline-black");
  page.querySelector(".pn").textContent = "Page " + n + " of 4";
  if (n !== 2) {
    const body = page.querySelector(".body");
    body.className = "-ml-[109px] whitespace-pre text-[17px] leading-[22px]";
    body.textContent = "";
    let y = 151;
    for (const [cy, x, text, mono] of pages[n]) {
      const line = document.createElement("div");
      line.className = mono ? "h-[22px] font-['Liberation_Mono',monospace] text-[18.330px] text-[#4a4a4a]" : "h-[22px]";
      line.style.marginTop = (cy - 11 - y) + "px";
      line.style.paddingLeft = x + "px";
      line.textContent = text;
      body.append(line);
      y = cy + 11;
    }
    body.firstChild.style.marginTop = "0px";
    body.style.paddingTop = (pages[n][0][0] - 11 - 151) + "px";
  }
  clip.append(page);
  holder.append(clip);
  const label = document.createElement("span");
  label.className = "mt-[5px] mr-[1px] text-[19px] leading-[26px] text-white font-['Roboto',sans-serif]";
  label.textContent = n;
  item.append(holder, label);
  rail.append(item);
}
</script>
</body>
</html>
